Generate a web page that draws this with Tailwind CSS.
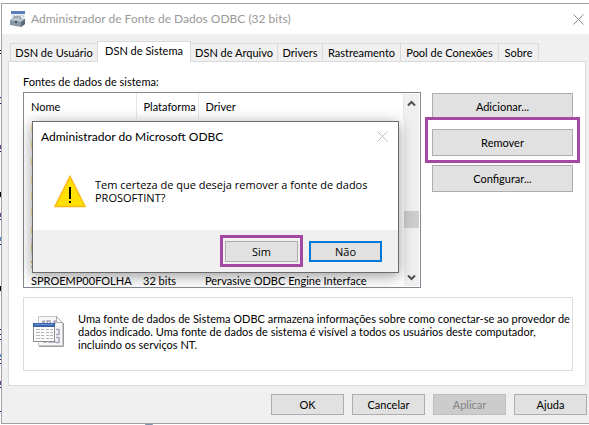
<!DOCTYPE html>
<html lang="pt-BR">
<head>
  <meta charset="UTF-8">
  <meta name="viewport" content="width=device-width, initial-scale=1.0">
  <title>Administrador de Fonte de Dados ODBC (32 bits)</title>
  <script src="https://cdn.jsdelivr.net/npm/@tailwindcss/browser@4"></script>
</head>
<body class="relative bg-white overflow-hidden pt-[3px] pl-[1px] pb-[2px] font-[Lato,'Liberation_Sans',sans-serif] text-[11px] leading-[13px] text-black">

  <!-- page behind the window -->
  <svg class="absolute left-0 top-0" width="2" height="425" shape-rendering="crispEdges" aria-hidden="true">
    <path d="M0 50h2v1H0zM0 53h2v1H0zM0 192h2v5H0zM0 286h2v5H0z" fill="#000"/>
    <path d="M0 97h2v1H0zM0 103h2v1H0zM0 151h2v1H0zM0 219h2v1H0zM0 244h2v1H0zM0 329h2v1H0zM0 334h2v1H0zM0 339h2v1H0zM0 359h2v1H0zM0 363h2v1H0zM0 387h2v1H0zM0 411h2v1H0z" fill="#1a1a9a"/>
    <path d="M0 145h2v4H0zM0 213h2v4H0zM0 381h2v4H0z" fill="#6b3f8c"/>
    <path d="M0 237h2v4H0zM0 354h2v3H0z" fill="#4a90d9"/>
  </svg>
  <span class="absolute left-[145px] top-[422px] w-2 h-2 rounded-full bg-[#7b93ab]"></span>

  <div class="relative flex flex-col bg-[#f0f0f0] border-t border-l border-b border-[#a0a0a0]">
    <header class="flex items-center h-[30px] pl-2 bg-white">
      <svg class="shrink-0" width="16" height="17" viewBox="0 0 16 17" aria-hidden="true">
        <rect x="1" y="0" width="14" height="11" fill="#e9eef5"/>
        <rect x="1" y="0" width="14" height="3" fill="#5b7fb8"/>
        <path d="M3 5h2M6 5h2M9 5h2M12 5h2" stroke="#aab4c2"/>
        <path d="M4 8V6h6l1 2" fill="none" stroke="#657079"/>
        <path d="M0 9l3-2 12 1v5l-4 3-11-2z" fill="#8797a3"/>
        <path d="M0 9l3-2 12 1-4 3z" fill="#b9c5cd"/>
        <path d="M11 11l4-3v5l-4 3z" fill="#5d6a75"/>
        <path d="M5 10h2v2H5z" fill="#3e4951"/>
      </svg>
      <h1 class="flex-1 pl-[5px] text-[12px] leading-4 text-[#999]">Administrador de Fonte de Dados ODBC (32 bits)</h1>
      <button type="button" aria-label="Fechar" class="flex items-center justify-center w-[21px] h-5">
        <svg width="11" height="11" viewBox="0 0 11 11" fill="none" stroke="#8a8a8a"><path d="M.5.5l10 10M10.5.5l-10 10"/></svg>
      </button>
    </header>

    <nav role="tablist" class="flex items-end h-[27px] pl-2 text-center whitespace-nowrap">
      <button type="button" role="tab" class="w-[88px] h-[18px] border border-b-0 border-[#d9d9d9]">DSN de Usuário</button>
      <button type="button" role="tab" aria-selected="true" class="relative -mx-px -mb-px w-[94px] h-[21px] pb-[3px] bg-white border border-b-0 border-[#d9d9d9]">DSN de Sistema</button>
      <button type="button" role="tab" class="w-[88px] h-[18px] border border-b-0 border-[#d9d9d9]">DSN de Arquivo</button>
      <button type="button" role="tab" class="w-[45px] h-[18px] border-t border-r border-[#d9d9d9]">Drivers</button>
      <button type="button" role="tab" class="w-[78px] h-[18px] border-t border-r border-[#d9d9d9]">Rastreamento</button>
      <button type="button" role="tab" class="w-[98px] h-[18px] border-t border-r border-[#d9d9d9]">Pool de Conexões</button>
      <button type="button" role="tab" class="w-[40px] h-[18px] border-t border-r border-[#d9d9d9]">Sobre</button>
    </nav>

    <main role="tabpanel" class="ml-1.5 mr-[3px] pl-[14px] pr-3 pt-3 pb-[14px] bg-white border border-[#d9d9d9]">
      <p class="pt-[1px] pb-[4px]">Fontes de dados de sistema:</p>

      <div class="flex gap-[11px]">
        <div class="relative flex-1 h-[196px]">
          <div class="flex h-full overflow-hidden border border-[#828790] bg-white">
            <div class="flex-1 overflow-hidden">
              <table class="w-full table-fixed border-collapse text-left whitespace-nowrap">
                <thead>
                  <tr class="h-[26px]">
                    <th class="w-[112px] p-0 pl-[7px] font-normal border-r border-[#e5e5e5]">Nome</th>
                    <th class="w-[62px] p-0 pl-[7px] font-normal border-r border-[#e5e5e5]">Plataforma</th>
                    <th class="p-0 pl-[7px] font-normal border-r border-[#e5e5e5]">Driver</th>
                  </tr>
                </thead>
                <tbody>
                  <tr class="h-[17px]"><td class="p-0 pl-[7px]">P</td><td></td><td></td></tr>
                  <tr class="h-[17px]"><td class="p-0 pl-[7px]">P</td><td></td><td></td></tr>
                  <tr class="h-[17px]"><td class="p-0 pl-[7px]">P</td><td></td><td></td></tr>
                  <tr class="h-[17px]"><td class="p-0 pl-[7px]">P</td><td></td><td></td></tr>
                  <tr class="h-[17px]"><td class="p-0 pl-[7px]">P</td><td></td><td></td></tr>
                  <tr class="h-[17px]"><td class="p-0 pl-[7px]">P</td><td></td><td></td></tr>
                  <tr class="h-[17px]"><td class="p-0 pl-[7px]">P</td><td></td><td></td></tr>
                  <tr class="h-[17px]"><td class="p-0 pl-[7px] bg-[#e4e4e4] bg-clip-content">P</td><td></td><td></td></tr>
                  <tr class="h-[17px]"><td class="p-0 pl-[7px]">S</td><td></td><td></td></tr>
                  <tr class="h-[17px]">
                    <td class="p-0 pl-[7px]">SPROEMP00FOLHA</td>
                    <td class="p-0 pl-[7px]">32 bits</td>
                    <td class="p-0 pl-[7px]">Pervasive ODBC Engine Interface</td>
                  </tr>
                </tbody>
              </table>
            </div>
            <div class="flex flex-col items-center w-[15px] my-px mr-px bg-[#f0f0f0]">
              <svg class="mt-[6px]" width="9" height="7" viewBox="0 0 9 7" fill="none" stroke="#505050" stroke-width="2"><path d="M1 5.5l3.500-3.500 3.500 3.500"/></svg>
              <div class="w-full h-[17px] mt-[104px] bg-[#cdcdcd]"></div>
              <svg class="mt-auto mb-[5px]" width="9" height="7" viewBox="0 0 9 7" fill="none" stroke="#505050" stroke-width="2"><path d="M1 1.500l3.500 3.500 3.500-3.500"/></svg>
            </div>
          </div>

          <!-- confirmation dialog -->
          <div role="dialog" aria-labelledby="dialogTitle" class="absolute left-[9px] top-[29px] w-[367px] bg-white border border-[#6b6b6b] shadow-[0_3px_14px_rgba(0,0,0,0.4)]">
            <div class="flex items-center h-[29px] pl-2 pr-[10px]">
              <h2 id="dialogTitle" class="flex-1 text-[12px] leading-4">Administrador do Microsoft ODBC</h2>
              <button type="button" aria-label="Fechar" class="p-0">
                <svg width="11" height="11" viewBox="0 0 11 11" fill="none" stroke="#bbb"><path d="M.5.5l10 10M10.500.5l-10 10"/></svg>
              </button>
            </div>
            <div class="flex items-start gap-[9px] h-[79px] pt-6 pl-[21px]">
              <svg class="shrink-0" width="32" height="33" viewBox="0 0 32 33" aria-hidden="true">
                <path d="M16 1.500L31 31.500H1z" fill="#ffe000" stroke="#fdb813" stroke-width="1.500"/>
                <path d="M16 12v12M16 26v2" stroke="#000" stroke-width="2"/>
              </svg>
              <p class="pt-[3px] font-['Open_Sans','Noto_Sans',sans-serif]">Tem certeza de que deseja remover a fonte de dados<br>PROSOFTINT?</p>
            </div>
            <div class="flex items-start justify-end gap-[11px] h-[42px] pt-[11px] pr-4 bg-[#f0f0f0] font-['Open_Sans','Noto_Sans',sans-serif]">
              <div class="relative flex">
                <button type="button" class="w-[73px] h-[21px] bg-[#e1e1e1] border border-[#adadad]">Sim</button>
                <span class="absolute -inset-x-[5px] -top-[6px] -bottom-[5px] border-3 border-[#a349a4] pointer-events-none"></span>
              </div>
              <button type="button" class="flex items-center justify-center w-[73px] h-[21px] bg-[#e1e1e1] border-2 border-[#0078d7]">Não</button>
            </div>
          </div>
        </div>

        <div class="flex flex-col gap-[9px] w-[141px] pt-px">
          <button type="button" class="h-[27px] bg-[#e1e1e1] border border-[#adadad]">Adicionar...</button>
          <div class="relative flex">
            <button type="button" class="flex-1 h-[27px] bg-[#e1e1e1] border border-[#adadad]">Remover</button>
            <span class="absolute -inset-x-[7px] -top-3 -bottom-[7px] border-3 border-[#a349a4] pointer-events-none"></span>
          </div>
          <button type="button" class="h-[27px] bg-[#e1e1e1] border border-[#adadad]">Configurar...</button>
        </div>
      </div>

      <section class="flex h-[74px] mt-[9px] pt-[14px] pl-[9px] border border-[#dcdcdc]">
        <svg class="shrink-0 mt-[3px]" width="32" height="33" viewBox="0 0 32 33" aria-hidden="true">
          <path d="M5.500 1.500h18l6 6v23h-24z" fill="#f7f7f7" stroke="#c8c8c8"/>
          <path d="M6 31.500h24.500V8" fill="none" stroke="#9a9a9a"/>
          <path d="M23.500 1.500v6h6z" fill="#fff" stroke="#a8a8a8"/>
          <g fill="none" stroke="#a7a3bd" stroke-width="1.500">
            <path d="M9 7l2-1v3M14 9V6h3v3M20 7l2-1v3M23 14.500h3v5h-3M23 22.500h3v5h-3M10 27h4M12 23v4M16 23h3v4h-3zM20 27h3"/>
          </g>
          <rect x=".5" y="8.500" width="21" height="18" fill="#fbfbfb" stroke="#8d8d8d"/>
          <rect x="0" y="8" width="22" height="4" fill="#3c62aa"/>
          <path d="M2 9.500h18" stroke="#6f94d6"/>
          <path d="M3 14.500h4m1 0h3m2 0h3m1 0h3M3 17.500h4m1 0h3m2 0h3m1 0h3M3 20.500h4m1 0h3m2 0h3m1 0h3M3 23.500h4m1 0h3m2 0h3m1 0h3" stroke="#b4b4b4"/>
        </svg>
        <p class="pl-[13px] whitespace-nowrap">Uma fonte de dados de Sistema ODBC armazena informações sobre como conectar-se ao provedor de<br>dados indicado. Uma fonte de dados de sistema é visível a todos os usuários deste computador,<br>incluindo os serviços NT.</p>
      </section>
    </main>

    <footer class="flex justify-end gap-2 pt-2 pr-[2px] pb-2">
      <button type="button" class="w-[73px] h-[21px] bg-[#e1e1e1] border border-[#adadad]">OK</button>
      <button type="button" class="w-[73px] h-[21px] bg-[#e1e1e1] border border-[#adadad]">Cancelar</button>
      <button type="button" disabled class="w-[73px] h-[21px] bg-[#ccc] border border-[#bfbfbf] text-[#838383]">Aplicar</button>
      <button type="button" class="w-[73px] h-[21px] bg-[#e1e1e1] border border-[#adadad]">Ajuda</button>
    </footer>
  </div>
</body>
</html>
